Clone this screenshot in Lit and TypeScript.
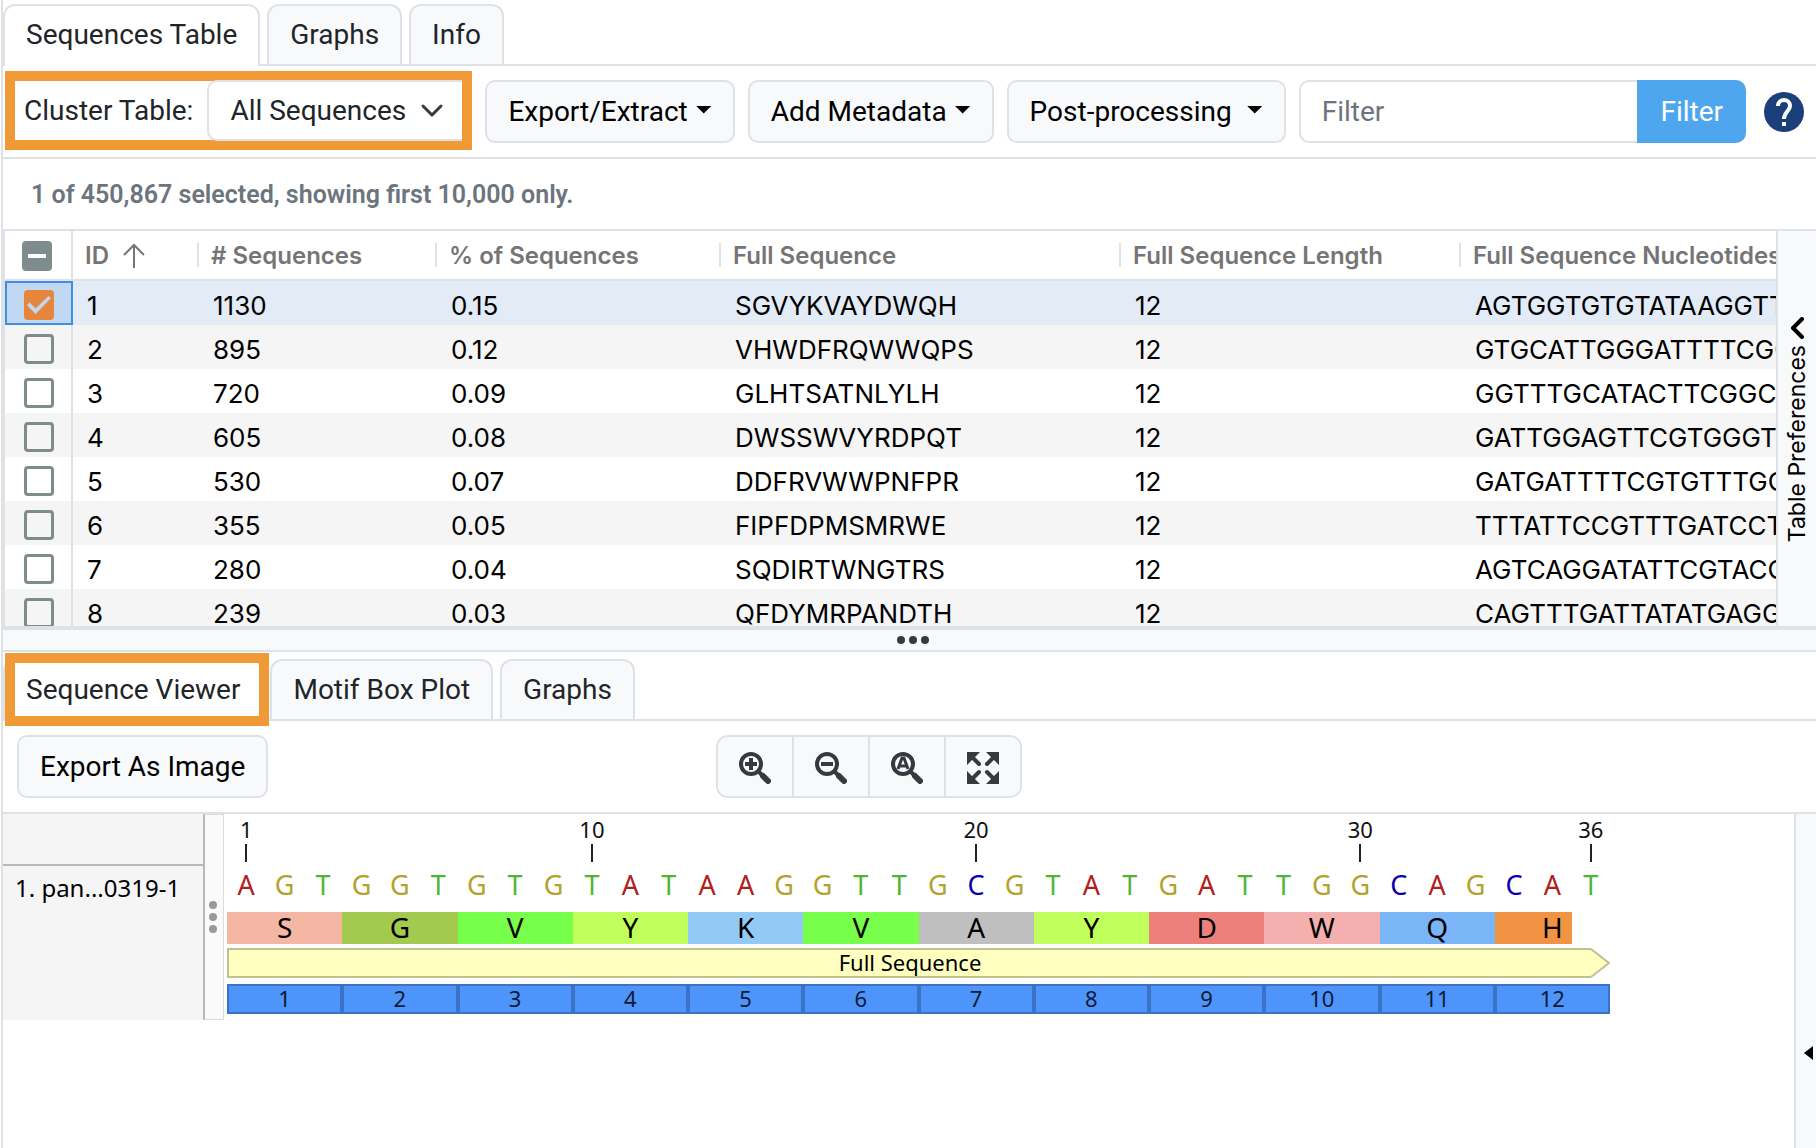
import { LitElement, html, css, svg } from "lit";
import { customElement, state } from "lit/decorators.js";

interface Row {
  id: number;
  count: string;
  percent: string;
  sequence: string;
  length: number;
  nucleotides: string;
}

const ROWS: Row[] = [
  { id: 1, count: "1130", percent: "0.15", sequence: "SGVYKVAYDWQH", length: 12, nucleotides: "AGTGGTGTGTATAAGGTTGCG" },
  { id: 2, count: "895", percent: "0.12", sequence: "VHWDFRQWWQPS", length: 12, nucleotides: "GTGCATTGGGATTTTCGGCAG" },
  { id: 3, count: "720", percent: "0.09", sequence: "GLHTSATNLYLH", length: 12, nucleotides: "GGTTTGCATACTTCGGCTACT" },
  { id: 4, count: "605", percent: "0.08", sequence: "DWSSWVYRDPQT", length: 12, nucleotides: "GATTGGAGTTCGTGGGTGTAT" },
  { id: 5, count: "530", percent: "0.07", sequence: "DDFRVWWPNFPR", length: 12, nucleotides: "GATGATTTTCGTGTTTGGTGG" },
  { id: 6, count: "355", percent: "0.05", sequence: "FIPFDPMSMRWE", length: 12, nucleotides: "TTTATTCCGTTTGATCCTATG" },
  { id: 7, count: "280", percent: "0.04", sequence: "SQDIRTWNGTRS", length: 12, nucleotides: "AGTCAGGATATTCGTACGTGG" },
  { id: 8, count: "239", percent: "0.03", sequence: "QFDYMRPANDTH", length: 12, nucleotides: "CAGTTTGATTATATGAGGCCT" },
];

const BASES = "AGTGGTGTGTATAAGGTTGCGTATGATTGGCAGCAT".split("");
const TICKS = [1, 10, 20, 30, 36];

const RESIDUES: { letter: string; kind: string }[] = [
  { letter: "S", kind: "ser" },
  { letter: "G", kind: "gly" },
  { letter: "V", kind: "val" },
  { letter: "Y", kind: "tyr" },
  { letter: "K", kind: "lys" },
  { letter: "V", kind: "val" },
  { letter: "A", kind: "ala" },
  { letter: "Y", kind: "tyr" },
  { letter: "D", kind: "asp" },
  { letter: "W", kind: "trp" },
  { letter: "Q", kind: "gln" },
  { letter: "H", kind: "his" },
];

const lens = (mark: unknown) => html`
  <svg class="tool-icon" viewBox="0 0 32 32" aria-hidden="true">
    <circle cx="12" cy="12" r="10" fill="none" stroke="currentColor" stroke-width="4" />
    <path d="M20 20 L24 24" stroke="currentColor" stroke-width="4" />
    <path d="M24 24 L29 29" stroke="currentColor" stroke-width="6" stroke-linecap="round" />
    ${mark}
  </svg>
`;

const plusMark = svg`<path d="M12 6 V18 M6 12 H18" stroke="currentColor" stroke-width="4" />`;
const minusMark = svg`<path d="M6 12 H18" stroke="currentColor" stroke-width="4" />`;
const autoMark = svg`<path d="M7 17 L11 6 H13 L17 17 M9 14 H15" fill="none" stroke="currentColor" stroke-width="3" />`;

@customElement("app-root")
export class AppRoot extends LitElement {
  @state() private selected = new Set<number>([1]);

  static styles = css`
    :host {
      --line: #dee2e6;
      --panel: #f8f9fb;
      --accent: #f09a37;
      --ink: #212529;
      display: block;
      color: var(--ink);
      background: #fff;
      font-family: Roboto, sans-serif;
      font-size: 28px;
      line-height: 40px;
    }
    * { box-sizing: border-box; }
    button, input, select { font: inherit; margin: 0; }

    .app {
      display: grid;
      grid-template-rows: 652fr 496fr;
      height: 100vh;
      margin-left: 1px;
      border-left: 2px solid var(--line);
      overflow: hidden;
    }
    .pane {
      display: flex;
      flex-direction: column;
      min-width: 0;
      min-height: 0;
    }

    .tabs {
      display: flex;
      gap: 7px;
      flex: none;
      padding-top: 4px;
      border-bottom: 2px solid var(--line);
    }
    .tab {
      height: 60px;
      padding: 0 21px;
      border: 2px solid var(--line);
      border-bottom: 0;
      border-radius: 12px 12px 0 0;
      background: var(--panel);
      color: var(--ink);
      white-space: nowrap;
    }
    .tab.active {
      height: 62px;
      margin-bottom: -2px;
      padding-bottom: 2px;
      background: #fff;
    }
    .lower .tabs { padding-top: 7px; }
    .marked { position: relative; }
    .marked::after {
      content: "";
      position: absolute;
      inset: -8px -8px -5px 0;
      border: 10px solid var(--accent);
      pointer-events: none;
    }

    .toolbar {
      display: flex;
      align-items: center;
      flex: none;
      gap: 13px;
      height: 93px;
      padding: 0 12px 0 2px;
      border-bottom: 2px solid var(--line);
    }
    .cluster {
      display: flex;
      align-items: center;
      height: 79px;
      margin-bottom: 2px;
      border: 10px solid var(--accent);
      padding-left: 9px;
      white-space: nowrap;
    }
    .cluster label { margin-right: 14px; }
    .picker {
      display: flex;
      align-items: center;
      height: 61px;
      border: 2px solid var(--line);
      border-right: 0;
      border-radius: 10px 0 0 10px;
      padding-right: 18px;
    }
    .picker select {
      appearance: none;
      border: 0;
      background: none;
      color: var(--ink);
      padding: 0 14px 0 21px;
      height: 57px;
    }
    .picker svg { width: 24px; height: 16px; }

    .btn {
      display: inline-flex;
      align-items: center;
      justify-content: center;
      gap: 8px;
      height: 63px;
      padding: 0 21px;
      border: 2px solid var(--line);
      border-radius: 10px;
      background: var(--panel);
      color: #000;
      white-space: nowrap;
    }
    .btn.wide { gap: 15px; }
    .caret {
      width: 16px;
      height: 8px;
      margin-bottom: 4px;
      background: #000;
      clip-path: polygon(0 0, 100% 0, 50% 100%);
    }
    .filter { display: flex; flex: 1; min-width: 0; }
    .filter input {
      flex: 1;
      min-width: 0;
      height: 63px;
      padding: 0 21px;
      border: 2px solid var(--line);
      border-right: 0;
      border-radius: 10px 0 0 10px;
      outline: 0;
    }
    .filter input::placeholder { color: #6c757d; opacity: 1; }
    .filter button {
      height: 63px;
      padding: 0 23px;
      border: 0;
      border-radius: 0 10px 10px 0;
      background: #4da6ee;
      color: #fff;
    }
    .help {
      width: 40px;
      height: 40px;
      margin-left: 5px;
      padding: 0;
      border: 0;
      background: none;
      flex: none;
    }
    .help svg { display: block; width: 40px; height: 40px; }

    .status {
      flex: none;
      margin: 0;
      padding: 16px 28px 14px;
      font-size: 25px;
      font-weight: 600;
      color: #6c757d;
    }

    .grid {
      display: flex;
      flex: 1;
      min-height: 0;
      border-top: 2px solid var(--line);
      font-family: Inter, sans-serif;
    }
    .scroller {
      flex: 1;
      min-width: 0;
      overflow: hidden;
      border-left: 2px solid var(--line);
      border-bottom: 2px solid var(--line);
    }
    table {
      width: 2056px;
      min-width: 100%;
      table-layout: fixed;
      border-collapse: separate;
      border-spacing: 0;
    }
    .c-check { width: 68px; }
    .c-id { width: 126px; }
    .c-count { width: 238px; }
    .c-percent { width: 284px; }
    .c-seq { width: 400px; }
    .c-len { width: 340px; }
    th {
      height: 50px;
      padding: 0;
      border-bottom: 2px solid var(--line);
      font-size: 24px;
      font-weight: 600;
      text-align: left;
      color: #757575;
      white-space: nowrap;
    }
    .head {
      display: flex;
      align-items: center;
      gap: 14px;
      height: 24px;
      padding: 2px 0 0 12px;
      border-right: 2px solid var(--line);
    }
    .head svg { width: 22px; height: 26px; }
    td {
      height: 44px;
      padding: 6px 14px 0;
      font-size: 26px;
      line-height: 38px;
      color: #000;
      white-space: nowrap;
      overflow: hidden;
    }
    th.check, td.check {
      padding: 2px 0 0;
      border-right: 2px solid var(--line);
    }
    td.check { padding-top: 4px; }
    tbody tr:nth-child(even) { background: #f5f5f5; }
    tbody tr.on { background: #e3ebf7; }
    tr.on td.check {
      background: #c1d8f3;
      border: 2px solid #3f8ee4;
    }
    .box {
      appearance: none;
      display: grid;
      place-items: center;
      width: 30px;
      height: 30px;
      margin: 0 0 0 19px;
      border: 3px solid #7f8c8d;
      border-radius: 4px;
    }
    th .box { margin-left: 17px; }
    tr.on .box { margin-left: 17px; }
    .box:indeterminate { background: #7f8c8d; }
    .box:indeterminate::before {
      content: "";
      width: 18px;
      height: 4px;
      background: #fff;
    }
    .box:checked { background: #e6853b; border-color: #e6853b; }
    .box:checked::before {
      content: "";
      width: 24px;
      height: 18px;
      background: #c1d8f3;
      clip-path: polygon(0 52%, 11% 36%, 36% 70%, 89% 0, 100% 11%, 36% 100%);
    }
    .prefs {
      display: flex;
      flex-direction: column;
      align-items: center;
      flex: none;
      gap: 6px;
      width: 40px;
      padding: 86px 0 0;
      border: 0;
      border-left: 2px solid var(--line);
      border-bottom: 2px solid var(--line);
      background: var(--panel);
      color: #000;
      font-size: 23px;
      line-height: 28px;
    }
    .prefs svg { width: 14px; height: 22px; flex: none; }
    .prefs span {
      writing-mode: vertical-rl;
      transform: rotate(180deg);
      white-space: nowrap;
    }
    .splitter {
      display: flex;
      align-items: center;
      justify-content: center;
      flex: none;
      gap: 4px;
      height: 24px;
      padding-left: 6px;
      border-top: 2px solid var(--line);
      border-bottom: 2px solid var(--line);
      background: var(--panel);
    }
    .splitter i {
      width: 8px;
      height: 8px;
      border-radius: 50%;
      background: #343a40;
    }

    .actions {
      display: grid;
      grid-template-columns: 1fr auto 1fr;
      align-items: center;
      flex: none;
      height: 93px;
      padding: 0 96px 0 14px;
      border-bottom: 2px solid var(--line);
    }
    .actions .btn { justify-self: start; }
    .tools {
      display: flex;
      height: 63px;
      border: 2px solid var(--line);
      border-radius: 12px;
      overflow: hidden;
    }
    .tools button {
      display: grid;
      place-items: center;
      width: 76px;
      padding: 2px 0 0;
      border: 0;
      border-right: 2px solid var(--line);
      background: var(--panel);
      color: #343a40;
    }
    .tools button:last-child { width: 74px; border-right: 0; }
    .tool-icon { width: 32px; height: 32px; }

    .viewer {
      display: flex;
      flex: 1;
      min-height: 0;
      font-family: "Noto Sans", sans-serif;
      color: #000;
    }
    .names {
      flex: none;
      width: 200px;
      height: 206px;
      background: #f5f5f5;
      font-size: 24px;
      line-height: 32px;
      white-space: nowrap;
    }
    .names-head { height: 52px; border-bottom: 2px solid #b8b8b8; }
    .name { padding: 6px 12px; }
    .handle {
      display: flex;
      flex-direction: column;
      align-items: center;
      justify-content: center;
      flex: none;
      gap: 4px;
      width: 21px;
      height: 206px;
      padding-right: 2px;
      border: 1px solid #dcdcdc;
      border-left: 2px solid #b8b8b8;
      background: #fafafa;
    }
    .handle i {
      width: 8px;
      height: 8px;
      border-radius: 50%;
      background: #999;
    }
    .canvas {
      flex: 1;
      min-width: 0;
      padding: 0 184px 0 3px;
    }
    .track {
      display: grid;
      grid-template-columns: repeat(36, minmax(0, 1fr));
      text-align: center;
    }
    .ruler { height: 48px; font-size: 22px; line-height: 30px; color: #111; }
    .tick {
      display: flex;
      flex-direction: column;
      align-items: center;
    }
    .tick::after {
      content: "";
      width: 2px;
      height: 18px;
      background: #222;
    }
    .bases { height: 50px; font-size: 27px; line-height: 46px; }
    .A { color: #b0201c; }
    .G { color: #b2a32f; }
    .T { color: #4fb536; }
    .C { color: #0a00b0; }
    .residues { font-size: 28px; line-height: 30px; height: 32px; }
    .residue { grid-column: span 3; }
    .ser { background: #f4b7a4; }
    .gly { background: #a4c94f; }
    .val { background: #78ff4b; }
    .tyr { background: #c0ff5c; }
    .lys { background: #93caf5; }
    .ala { background: #bfbfbf; }
    .asp { background: #ed807b; }
    .trp { background: #f4b0ae; }
    .gln { background: #7ab5f7; }
    .his { background: linear-gradient(to right, #f09342 67%, transparent 67%); }
    .annotation {
      display: flex;
      height: 30px;
      margin: 4px 0 6px;
      font-size: 22px;
      line-height: 24px;
      text-align: center;
    }
    .annotation div {
      flex: 1;
      border: 2px solid #c1c08f;
      border-right: 0;
      background: #ffffc0;
    }
    .annotation svg { width: 19px; height: 30px; flex: none; }
    .numbers { font-size: 22px; line-height: 24px; color: #0d1b33; }
    .number {
      grid-column: span 3;
      height: 30px;
      border: 2px solid #3b73c4;
      background: #4d94fb;
    }
    .rail {
      display: flex;
      align-items: center;
      justify-content: flex-end;
      flex: none;
      width: 22px;
      padding: 144px 3px 0 0;
      border: 0;
      border-left: 2px solid var(--line);
      background: var(--panel);
    }
    .rail svg { width: 9px; height: 14px; }
  `;

  private toggle(id: number) {
    const next = new Set(this.selected);
    next.has(id) ? next.delete(id) : next.add(id);
    this.selected = next;
  }

  private renderRow(row: Row) {
    const on = this.selected.has(row.id);
    return html`
      <tr class=${on ? "on" : ""}>
        <td class="check">
          <input class="box" type="checkbox" aria-label="Select row ${row.id}" .checked=${on} @change=${() => this.toggle(row.id)} />
        </td>
        <td>${row.id}</td>
        <td>${row.count}</td>
        <td>${row.percent}</td>
        <td>${row.sequence}</td>
        <td>${row.length}</td>
        <td>${row.nucleotides}</td>
      </tr>
    `;
  }

  private renderTable() {
    return html`
      <div class="grid">
        <div class="scroller">
          <table>
            <colgroup>
              <col class="c-check" /><col class="c-id" /><col class="c-count" /><col class="c-percent" />
              <col class="c-seq" /><col class="c-len" /><col />
            </colgroup>
            <thead>
              <tr>
                <th class="check">
                  <input class="box" type="checkbox" aria-label="Select all rows" .indeterminate=${true} />
                </th>
                <th>
                  <div class="head">
                    ID
                    <svg viewBox="0 0 22 26" aria-hidden="true">
                      <path d="M11 25 V2 M1 12 L11 2 L21 12" fill="none" stroke="#757575" stroke-width="2" />
                    </svg>
                  </div>
                </th>
                <th><div class="head"># Sequences</div></th>
                <th><div class="head">% of Sequences</div></th>
                <th><div class="head">Full Sequence</div></th>
                <th><div class="head">Full Sequence Length</div></th>
                <th><div class="head">Full Sequence Nucleotides</div></th>
              </tr>
            </thead>
            <tbody>
              ${ROWS.map((row) => this.renderRow(row))}
            </tbody>
          </table>
        </div>
        <button class="prefs">
          <svg viewBox="0 0 14 22" aria-hidden="true">
            <path d="M12 2 L3 11 L12 20" fill="none" stroke="#000" stroke-width="4" stroke-linecap="round" stroke-linejoin="round" />
          </svg>
          <span>Table Preferences</span>
        </button>
      </div>
    `;
  }

  private renderViewer() {
    return html`
      <div class="viewer">
        <div class="names">
          <div class="names-head"></div>
          <div class="name">1. pan...0319-1</div>
        </div>
        <div class="handle"><i></i><i></i><i></i></div>
        <div class="canvas">
          <div class="track ruler">
            ${TICKS.map((n) => html`<div class="tick" style="grid-column: ${n}; grid-row: 1">${n}</div>`)}
          </div>
          <div class="track bases">${BASES.map((b) => html`<span class=${b}>${b}</span>`)}</div>
          <div class="track residues">
            ${RESIDUES.map((r) => html`<span class="residue ${r.kind}">${r.letter}</span>`)}
          </div>
          <div class="annotation">
            <div>Full Sequence</div>
            <svg viewBox="0 0 19 30" aria-hidden="true">
              <path d="M0 1 L18 15 L0 29" fill="#ffffc0" stroke="#c1c08f" stroke-width="2" />
            </svg>
          </div>
          <div class="track numbers">
            ${RESIDUES.map((_, i) => html`<span class="number">${i + 1}</span>`)}
          </div>
        </div>
        <button class="rail" aria-label="Open side panel">
          <svg viewBox="0 0 9 14" aria-hidden="true"><path d="M9 0 V14 L0 7 Z" /></svg>
        </button>
      </div>
    `;
  }

  render() {
    return html`
      <main class="app">
        <section class="pane">
          <nav class="tabs">
            <button class="tab active">Sequences Table</button>
            <button class="tab">Graphs</button>
            <button class="tab">Info</button>
          </nav>
          <div class="toolbar">
            <div class="cluster">
              <label for="cluster">Cluster Table:</label>
              <div class="picker">
                <select id="cluster"><option>All Sequences</option></select>
                <svg viewBox="0 0 24 16" aria-hidden="true">
                  <path d="M3 3 L12 12 L21 3" fill="none" stroke="#343a40" stroke-width="3" stroke-linecap="round" stroke-linejoin="round" />
                </svg>
              </div>
            </div>
            <button class="btn">Export/Extract<i class="caret"></i></button>
            <button class="btn">Add Metadata<i class="caret"></i></button>
            <button class="btn wide">Post-processing<i class="caret"></i></button>
            <div class="filter">
              <input type="text" placeholder="Filter" aria-label="Filter" />
              <button>Filter</button>
            </div>
            <button class="help" aria-label="Help">
              <svg viewBox="0 0 40 40" aria-hidden="true">
                <circle cx="20" cy="20" r="20" fill="#1b3f7a" />
                <path d="M14 14 C14 6 26 6 26 14 C26 19 20 20 20 27" fill="none" stroke="#fff" stroke-width="4" />
                <path d="M20 30 V34" stroke="#fff" stroke-width="4" />
              </svg>
            </button>
          </div>
          <p class="status">1 of 450,867 selected, showing first 10,000 only.</p>
          ${this.renderTable()}
          <div class="splitter"><i></i><i></i><i></i></div>
        </section>
        <section class="pane lower">
          <nav class="tabs">
            <button class="tab active marked">Sequence Viewer</button>
            <button class="tab">Motif Box Plot</button>
            <button class="tab">Graphs</button>
          </nav>
          <div class="actions">
            <button class="btn">Export As Image</button>
            <div class="tools">
              <button aria-label="Zoom in">${lens(plusMark)}</button>
              <button aria-label="Zoom out">${lens(minusMark)}</button>
              <button aria-label="Automatic zoom">${lens(autoMark)}</button>
              <button aria-label="Fit to window">
                <svg class="tool-icon" viewBox="0 0 32 32" aria-hidden="true">
                  <path d="M0 0 H13 L0 13 Z M32 0 V13 L19 0 Z M0 32 V19 L13 32 Z M32 32 H19 L32 19 Z" fill="currentColor" />
                  <path d="M5 5 L12 12 M27 5 L20 12 M5 27 L12 20 M27 27 L20 20" stroke="currentColor" stroke-width="4" stroke-linecap="round" />
                </svg>
              </button>
            </div>
          </div>
          ${this.renderViewer()}
        </section>
      </main>
    `;
  }
}
